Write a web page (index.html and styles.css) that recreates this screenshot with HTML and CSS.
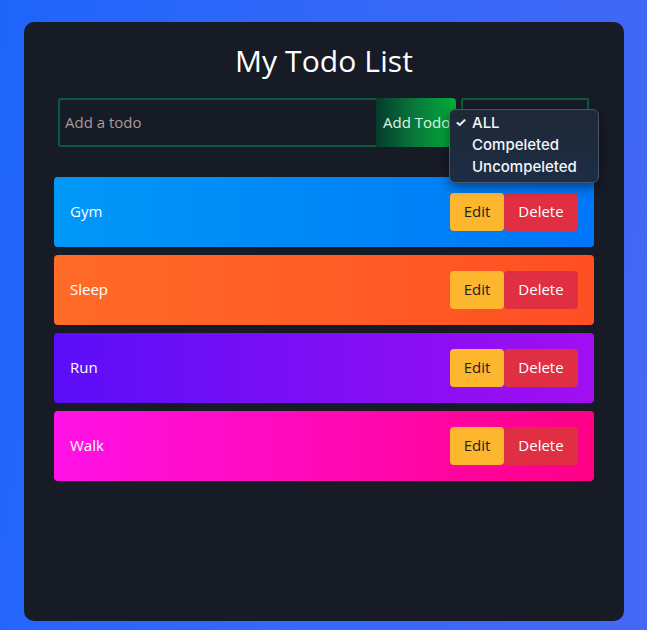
FILE: index.html
```html
<!DOCTYPE html>
<html lang="en">
<head>
<meta charset="utf-8">
<title>My Todo List</title>
<link rel="stylesheet" href="styles.css">
</head>
<body>
<div class="app">
  <h1 class="title">My Todo List</h1>
  <form class="todo-form">
    <input class="todo-input" type="text" placeholder="Add a todo">
    <button class="add-btn" type="button">Add Todo</button>
    <div class="filter">
      <div class="filter-box"></div>
      <ul class="menu">
        <li class="menu-item"><span class="check">✓</span>ALL</li>
        <li class="menu-item"><span class="check"></span>Compeleted</li>
        <li class="menu-item"><span class="check"></span>Uncompeleted</li>
      </ul>
    </div>
  </form>
  <ul class="todos">
    <li class="todo todo-blue"><span class="todo-text">Gym</span><div class="actions"><button class="btn btn-edit">Edit</button><button class="btn btn-delete">Delete</button></div></li>
    <li class="todo todo-orange"><span class="todo-text">Sleep</span><div class="actions"><button class="btn btn-edit">Edit</button><button class="btn btn-delete">Delete</button></div></li>
    <li class="todo todo-purple"><span class="todo-text">Run</span><div class="actions"><button class="btn btn-edit">Edit</button><button class="btn btn-delete">Delete</button></div></li>
    <li class="todo todo-pink"><span class="todo-text">Walk</span><div class="actions"><button class="btn btn-edit">Edit</button><button class="btn btn-delete">Delete</button></div></li>
  </ul>
</div>
</body>
</html>
```

FILE: styles.css
```css
* { box-sizing: border-box; }
html, body { margin: 0; height: 100%; }
body {
  background: linear-gradient(100deg, #1e65fb 0%, #3567f8 50%, #4667f5 100%);
  font-family: "Open Sans", "DejaVu Sans", sans-serif;
  padding: 22px 23px 9px 24px;
}
.app {
  width: 600px;
  height: 599px;
  background: #171b26;
  border-radius: 10px;
  padding: 19px 30px 0 30px;
}
.title {
  margin: 0;
  text-align: center;
  color: #ffffff;
  font-weight: 400;
  font-size: 30px;
  line-height: 40px;
  letter-spacing: 0.1px;
}
.todo-form {
  margin: 17px 5px 0 4px;
  display: flex;
  height: 49px;
}
.todo-input {
  width: 318px;
  height: 49px;
  background: #171b26;
  border: 2px solid #0b5a3e;
  border-right: none;
  border-radius: 3px 0 0 3px;
  padding: 0 5px 2px 5px;
  font-family: inherit;
  font-size: 15px;
  color: #ffffff;
  outline: none;
}
.todo-input::placeholder { color: #a89a9c; }
.add-btn {
  width: 80px;
  height: 49px;
  border: none;
  border-radius: 0 4px 4px 0;
  background: linear-gradient(90deg, #063b2b 0%, #087a3c 50%, #00ad38 100%);
  color: #dff5e6;
  font-family: inherit;
  font-size: 15px;
  padding: 0 0 2px 7px;
  text-align: left;
  white-space: nowrap;
  overflow: hidden;
}
.filter {
  position: relative;
  margin-left: 5px;
  width: 128px;
}
.filter-box {
  height: 49px;
  border: 2px solid #0b5a3e;
  border-radius: 2px;
}
.menu {
  position: absolute;
  left: -12px;
  top: 11px;
  width: 150px;
  margin: 0;
  padding: 1px 0 5px 0;
  list-style: none;
  background: linear-gradient(180deg, #1f2836 0%, #1c2d45 100%);
  border: 1px solid #4b5563;
  border-radius: 6px;
  box-shadow: 0 4px 12px rgba(0,0,0,0.45);
  font-family: "Inter", "Liberation Sans", sans-serif;
  font-weight: 500;
  font-size: 15px;
  color: #f4f6f9;
}
.menu-item {
  display: flex;
  align-items: center;
  height: 22px;
  padding-left: 5px;
}
.check {
  width: 17px;
  font-size: 13px;
  font-weight: 700;
}
.todos {
  list-style: none;
  margin: 30px 0 0 0;
  padding: 0;
  display: flex;
  flex-direction: column;
  gap: 8px;
}
.todo {
  height: 70px;
  border-radius: 4px;
  display: flex;
  align-items: center;
  justify-content: space-between;
  padding: 0 16px 2px 16px;
  color: #ffffff;
  font-size: 15px;
}
.todo-blue { background: linear-gradient(90deg, #0098f6 0%, #0076f8 100%); }
.todo-orange { background: linear-gradient(90deg, #ff6b28 0%, #ff4f24 100%); }
.todo-purple { background: linear-gradient(90deg, #5b0ef8 0%, #a10ff1 100%); }
.todo-pink { background: linear-gradient(90deg, #ff12e6 0%, #ff0086 100%); }
.actions { display: flex; margin-top: 2px; }
.btn {
  height: 38px;
  border: none;
  border-radius: 4px;
  font-family: inherit;
  font-size: 15px;
  padding: 0 0 3px 0;
}
.btn-edit { width: 54px; background: #fdb72f; color: #222222; }
.btn-delete { width: 74px; background: #e02e42; color: #ffffff; }
```
